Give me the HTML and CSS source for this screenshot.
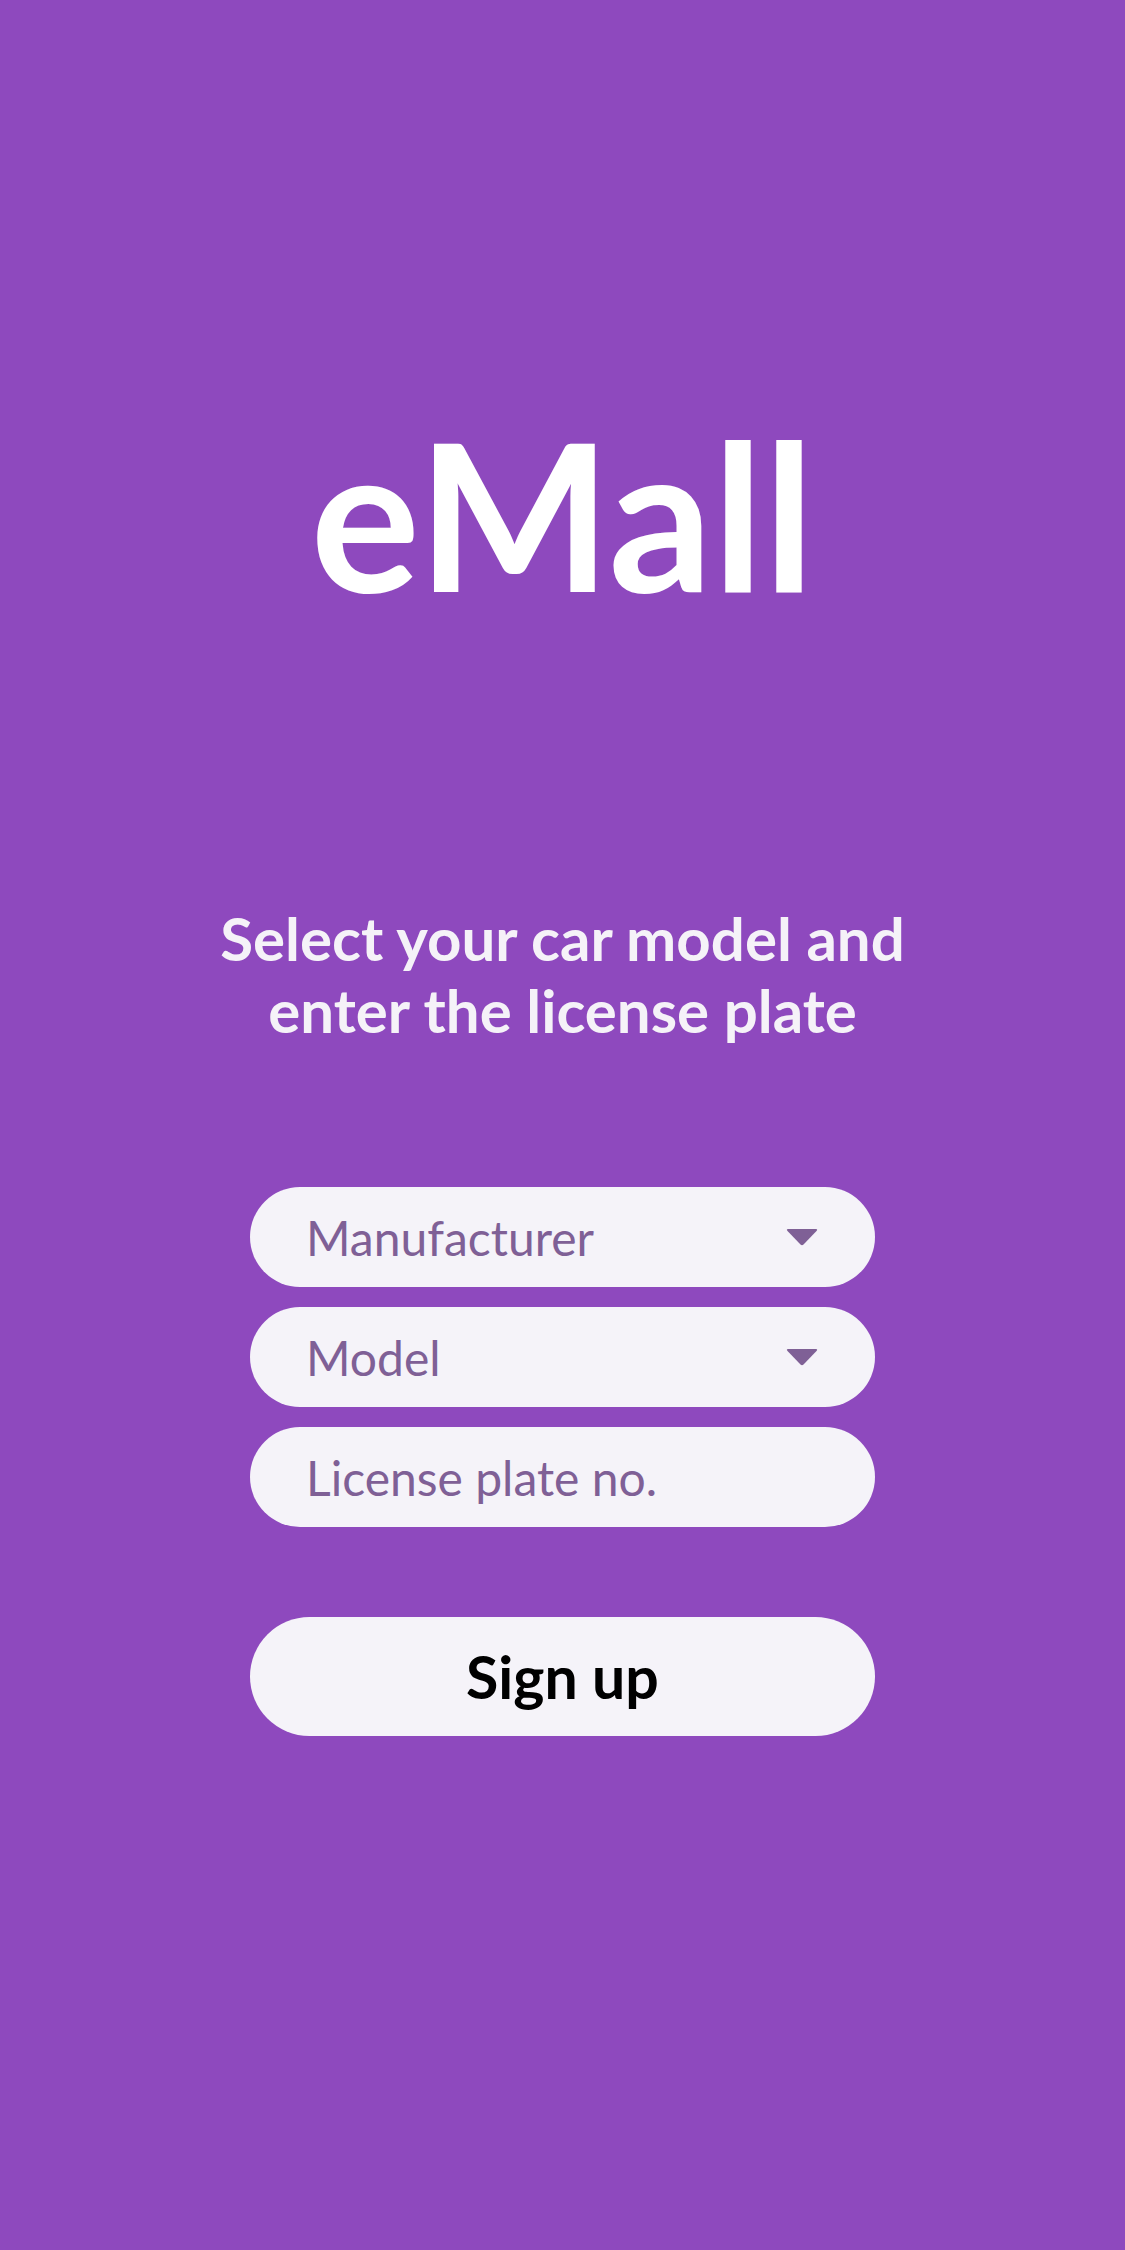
FILE: index.html
```html
<!DOCTYPE html>
<html lang="en">
<head>
<meta charset="utf-8">
<title>eMall</title>
<link rel="stylesheet" href="styles.css">
</head>
<body>
<main class="screen">
  <h1 class="logo">eMall</h1>
  <p class="prompt">Select your car model and<br>enter the license plate</p>
  <form class="form">
    <div class="field">
      <span class="placeholder">Manufacturer</span>
      <svg class="caret" width="34" height="20" viewBox="0 0 34 20"><path d="M3 2 H31 Q33 2 31.5 4 L18.5 17.5 Q17 19 15.5 17.5 L2.5 4 Q1 2 3 2 Z" fill="#7f6096"/></svg>
    </div>
    <div class="field">
      <span class="placeholder">Model</span>
      <svg class="caret" width="34" height="20" viewBox="0 0 34 20"><path d="M3 2 H31 Q33 2 31.5 4 L18.5 17.5 Q17 19 15.5 17.5 L2.5 4 Q1 2 3 2 Z" fill="#7f6096"/></svg>
    </div>
    <div class="field">
      <span class="placeholder">License plate no.</span>
    </div>
    <button type="button" class="signup">Sign up</button>
  </form>
</main>
</body>
</html>
```
FILE: styles.css
```css
html, body {
  margin: 0;
  padding: 0;
}
body {
  background: #8e49be;
  font-family: Lato, "Noto Sans", sans-serif;
  width: 1125px;
  height: 2250px;
  overflow: hidden;
}
.screen {
  display: flex;
  flex-direction: column;
  align-items: center;
}
.logo {
  margin: 411px 0 0;
  font-size: 205px;
  line-height: 205px;
  font-weight: 700;
  color: #ffffff;
}
.prompt {
  margin: 286px 0 0;
  font-size: 60px;
  line-height: 72px;
  font-weight: 700;
  color: #f5f2f8;
  text-align: center;
}
.form {
  margin-top: 141px;
  width: 625px;
  display: flex;
  flex-direction: column;
  gap: 20px;
}
.field {
  height: 100px;
  border-radius: 50px;
  background: #f5f3f9;
  display: flex;
  align-items: center;
  justify-content: space-between;
  padding: 0 56px 0 56px;
  box-sizing: border-box;
}
.placeholder {
  font-size: 48px;
  color: #7f6096;
}
.caret {
  display: block;
}
.signup {
  margin-top: 70px;
  height: 119px;
  border: none;
  border-radius: 60px;
  background: #f5f3f9;
  font-family: Lato, "Noto Sans", sans-serif;
  font-weight: 700;
  font-size: 59px;
  color: #000000;
  padding: 0;
}
```
